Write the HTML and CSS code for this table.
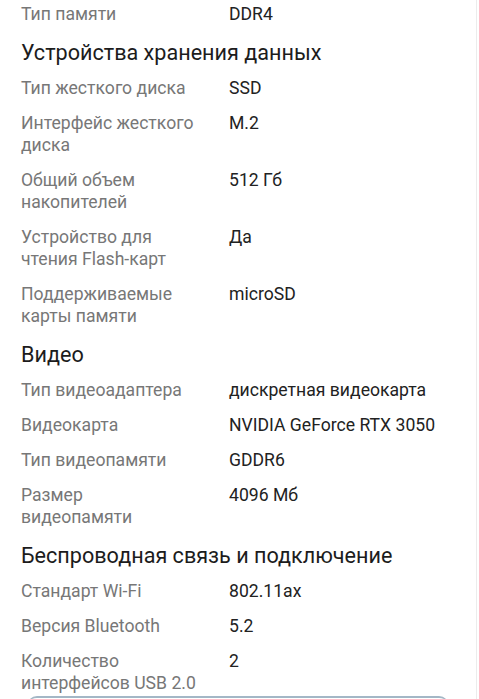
FILE: index.html
```html
<!DOCTYPE html>
<html lang="ru">
<head>
<meta charset="utf-8">
<link rel="stylesheet" href="styles.css">
</head>
<body>
<div class="page">
  <div class="specs">
    <div class="row"><div class="label">Тип памяти</div><div class="value">DDR4</div></div>

    <h2 class="group">Устройства хранения данных</h2>
    <div class="row"><div class="label">Тип жесткого диска</div><div class="value">SSD</div></div>
    <div class="row"><div class="label">Интерфейс жесткого диска</div><div class="value">M.2</div></div>
    <div class="row"><div class="label">Общий объем накопителей</div><div class="value">512 Гб</div></div>
    <div class="row"><div class="label">Устройство для чтения Flash-карт</div><div class="value">Да</div></div>
    <div class="row"><div class="label">Поддерживаемые карты памяти</div><div class="value">microSD</div></div>

    <h2 class="group">Видео</h2>
    <div class="row"><div class="label">Тип видеоадаптера</div><div class="value">дискретная видеокарта</div></div>
    <div class="row"><div class="label">Видеокарта</div><div class="value">NVIDIA GeForce RTX 3050</div></div>
    <div class="row"><div class="label">Тип видеопамяти</div><div class="value">GDDR6</div></div>
    <div class="row"><div class="label">Размер видеопамяти</div><div class="value">4096 Мб</div></div>

    <h2 class="group">Беспроводная связь и подключение</h2>
    <div class="row"><div class="label">Стандарт Wi-Fi</div><div class="value">802.11ax</div></div>
    <div class="row"><div class="label">Версия Bluetooth</div><div class="value">5.2</div></div>
    <div class="row"><div class="label">Количество интерфейсов USB 2.0</div><div class="value">2</div></div>
  </div>
  <div class="more"></div>
</div>
</body>
</html>
```
FILE: styles.css
```css
html, body {
  margin: 0;
  padding: 0;
  background: #ffffff;
}
body {
  font-family: Roboto, "Noto Sans", "Liberation Sans", sans-serif;
  overflow: hidden;
}
.page {
  width: 476px;
  height: 699px;
  border-right: 1px solid #ececec;
  box-sizing: content-box;
  overflow: hidden;
}
.specs {
  margin-top: -4px;
  padding: 0 21px;
}
.row {
  display: grid;
  grid-template-columns: 176px 1fr;
  column-gap: 32px;
  padding: 6.5px 0;
  font-size: 17.6px;
  line-height: 22px;
}
.label {
  color: #777777;
}
.value {
  color: #222222;
}
.group {
  margin: 0;
  padding: 8px 0 3px;
  font-size: 21.6px;
  line-height: 28px;
  font-weight: 400;
  color: #1c1c1c;
}
.more {
  margin: -4px 27px 0;
  height: 20px;
  border-top: 2px solid #a3b7c6;
  border-radius: 10px 10px 0 0;
}
```
